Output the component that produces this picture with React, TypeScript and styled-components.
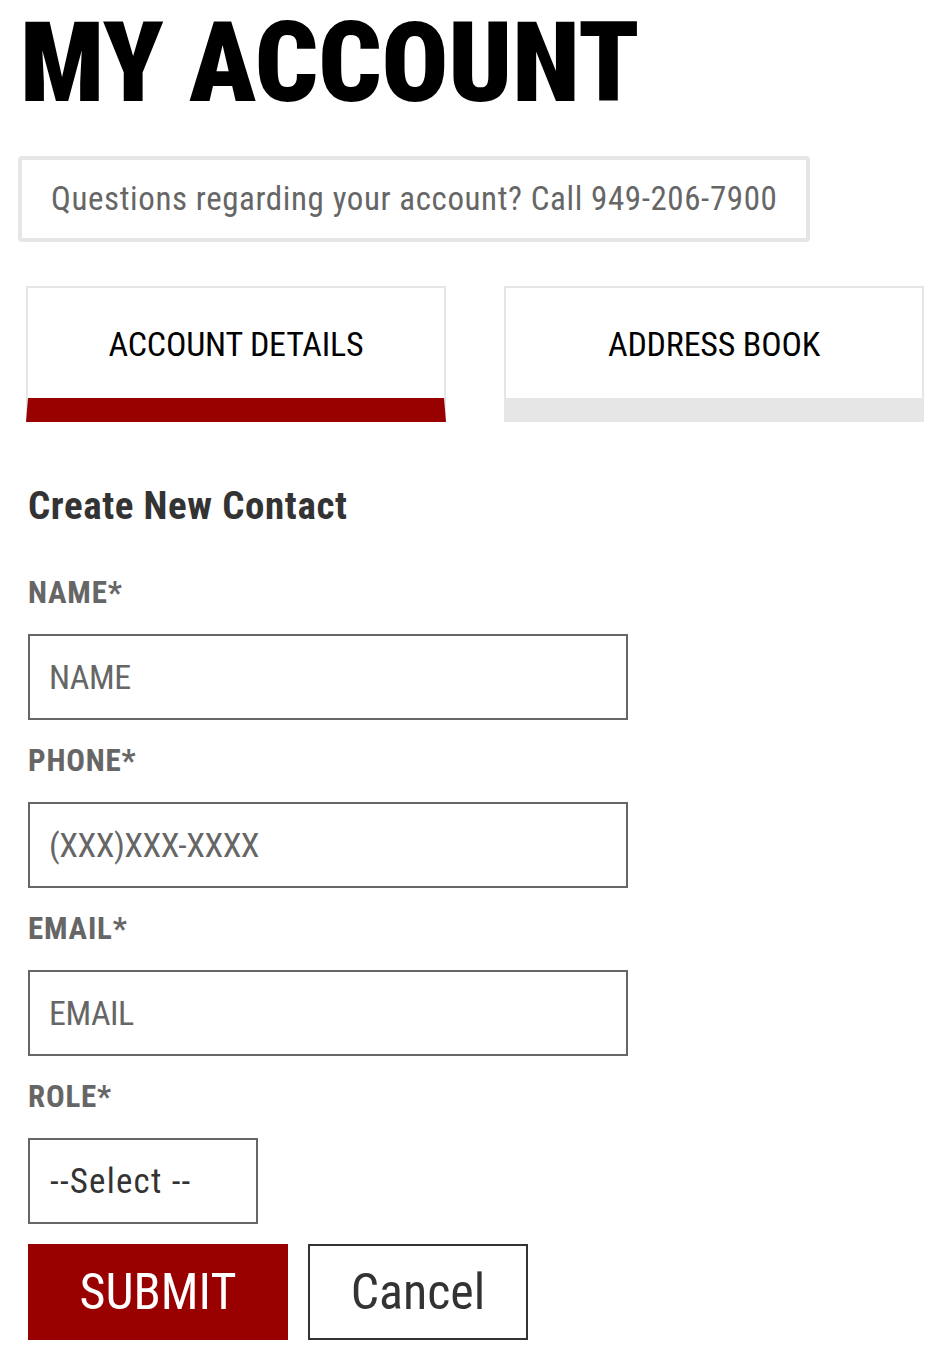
import React from "react";
import styled, { createGlobalStyle } from "styled-components";

const GlobalStyle = createGlobalStyle`
  html, body { margin: 0; padding: 0; background: #fff; }
  body { font-family: "Roboto Condensed", Roboto, "Liberation Sans", sans-serif; }
  * { box-sizing: border-box; }
`;

const Page = styled.div`
  padding: 8px 8px 32px 8px;
  width: 950px;
`;

const Title = styled.h1`
  margin: 0 0 0 12px;
  font-size: 111px;
  line-height: 111px;
  font-weight: 900;
  color: #000;
  letter-spacing: -0.2px;
`;

const InfoBox = styled.div`
  margin: 37px 0 0 10px;
  width: 792px;
  height: 86px;
  border: 4px solid #e6e6e6;
  border-radius: 4px;
  padding-left: 29px;
  font-size: 33px;
  letter-spacing: 0.6px;
  line-height: 78px;
  color: #666;
  white-space: nowrap;
`;

const Tabs = styled.div`
  display: flex;
  gap: 58px;
  margin: 44px 0 0 18px;
`;

const Tab = styled.div<{ $active?: boolean }>`
  width: 420px;
  height: 136px;
  border: 2px solid #e6e6e6;
  border-bottom: 24px solid ${(p) => (p.$active ? "#990000" : "#e6e6e6")};
  display: flex;
  align-items: center;
  justify-content: center;
  font-size: 34px;
  letter-spacing: -0.2px;
  color: #000;
  padding-top: 2px;
`;

const Form = styled.form`
  margin: 0 0 0 20px;
  display: flex;
  flex-direction: column;
`;

const Heading = styled.h2`
  margin: 65px 0 0 0;
  font-size: 39px;
  line-height: 38px;
  letter-spacing: 0.6px;
  font-weight: 700;
  color: #333;
`;

const Fields = styled.div`
  display: flex;
  flex-direction: column;
  gap: 26px;
  margin-top: 53px;
`;

const Field = styled.div`
  display: flex;
  flex-direction: column;
  align-items: flex-start;
`;

const Label = styled.label`
  font-size: 31px;
  line-height: 30px;
  letter-spacing: 0.8px;
  font-weight: 700;
  color: #666;
  margin-bottom: 26px;
`;

const TextInput = styled.input`
  width: 600px;
  height: 86px;
  border: 2px solid #666;
  border-radius: 0;
  padding: 0 0 0 19px;
  font-family: inherit;
  font-size: 34px;
  letter-spacing: -0.5px;
  color: #333;
  outline: none;
  background: #fff;
  &::placeholder {
    color: #666;
    opacity: 1;
  }
`;

const Select = styled.select`
  width: 230px;
  height: 86px;
  border: 2px solid #666;
  border-radius: 0;
  padding: 0 0 0 20px;
  font-family: inherit;
  font-size: 35px;
  letter-spacing: 1.2px;
  color: #333;
  background: #fff;
  appearance: none;
  -webkit-appearance: none;
  outline: none;
`;

const Actions = styled.div`
  display: flex;
  gap: 20px;
  margin-top: 20px;
`;

const Button = styled.button<{ $primary?: boolean }>`
  height: 96px;
  width: ${(p) => (p.$primary ? "260px" : "220px")};
  border: 2px solid ${(p) => (p.$primary ? "#990000" : "#333")};
  background: ${(p) => (p.$primary ? "#990000" : "#fff")};
  color: ${(p) => (p.$primary ? "#fff" : "#333")};
  font-family: inherit;
  font-size: 50px;
  font-weight: 400;
  padding: 0;
  border-radius: 0;
  cursor: pointer;
`;

export default function App() {
  return (
    <>
      <GlobalStyle />
      <Page>
        <Title>MY ACCOUNT</Title>
        <InfoBox>Questions regarding your account? Call 949-206-7900</InfoBox>
        <Tabs>
          <Tab $active>ACCOUNT DETAILS</Tab>
          <Tab>ADDRESS BOOK</Tab>
        </Tabs>
        <Form onSubmit={(e) => e.preventDefault()}>
          <Heading>Create New Contact</Heading>
          <Fields>
            <Field>
              <Label>NAME*</Label>
              <TextInput placeholder="NAME" />
            </Field>
            <Field>
              <Label>PHONE*</Label>
              <TextInput placeholder="(XXX)XXX-XXXX" />
            </Field>
            <Field>
              <Label>EMAIL*</Label>
              <TextInput placeholder="EMAIL" />
            </Field>
            <Field>
              <Label>ROLE*</Label>
              <Select defaultValue="">
                <option value="">--Select --</option>
              </Select>
            </Field>
          </Fields>
          <Actions>
            <Button type="submit" $primary>SUBMIT</Button>
            <Button type="button">Cancel</Button>
          </Actions>
        </Form>
      </Page>
    </>
  );
}
